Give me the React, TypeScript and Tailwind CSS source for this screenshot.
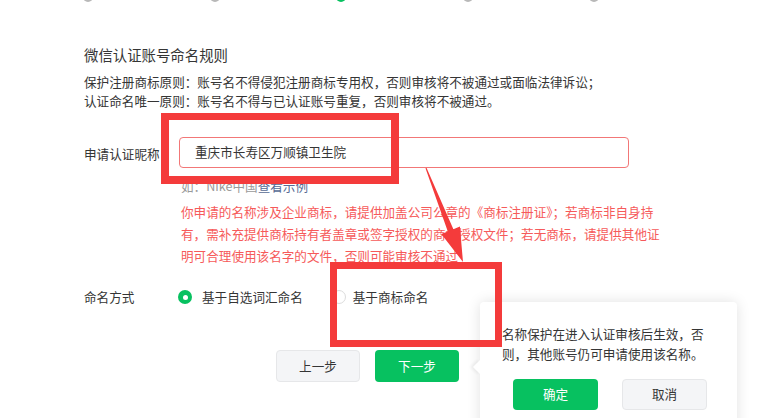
import type { FC } from "react";

const steps = [false, false, true, false, false];

const Steps: FC = () => (
  <div className="flex h-[3px] gap-[116.5px] overflow-hidden pl-[83px]">
    {steps.map((on, i) => (
      <span
        key={i}
        className={`-mt-[8px] block h-[10px] w-[10px] shrink-0 rounded-full ${
          on ? "bg-[#07c160]" : "bg-[#b8b8b8]"
        }`}
      />
    ))}
  </div>
);

const Popover: FC = () => (
  <div className="absolute left-[480px] top-[302px] h-[140px] w-[257px] rounded-[4px] bg-white px-[22px] pt-[22px] shadow-[0_0_14px_rgba(0,0,0,0.12)]">
    <span className="absolute -left-[5px] top-[60px] h-[10px] w-[10px] rotate-45 bg-white shadow-[-2px_2px_3px_rgba(0,0,0,0.06)]" />
    <p className="w-[206px] text-[12.6px] leading-[20px] text-[#353535]">
      名称保护在进入认证审核后生效，否则，其他账号仍可申请使用该名称。
    </p>
    <div className="mt-[15px] flex justify-center gap-[24px] pl-[3px]">
      <button className="h-[31px] w-[85px] rounded-[4px] bg-[#07c160] text-[12.6px] text-white">
        确定
      </button>
      <button className="h-[31px] w-[85px] rounded-[4px] border border-[#e6e7e9] bg-[#f4f5f7] text-[12.6px] text-[#353535]">
        取消
      </button>
    </div>
  </div>
);

const Annotations: FC = () => (
  <>
    <div className="absolute left-[161px] top-[113px] h-[71px] w-[238px] border-[8px] border-[#f43b3b] border-t-[7px]" />
    <div className="absolute left-[330px] top-[262px] h-[85px] w-[172px] border-[7px] border-[#f43b3b]" />
    <svg
      className="pointer-events-none absolute left-0 top-0"
      width="757"
      height="418"
      viewBox="0 0 757 418"
    >
      <polygon
        fill="#f43b3b"
        points="425.5,168.2 426.5,167.8 453.4,229.2 459.9,226.6 463,262 441.3,234 447.8,231.4"
      />
    </svg>
  </>
);

const App: FC = () => {
  return (
    <div className="relative h-[418px] w-[757px] overflow-hidden bg-white font-['Noto_Sans_CJK_SC','Noto_Sans',sans-serif] text-[#353535]">
      <Steps />

      <div className="pl-[84px]">
        <h2 className="mt-[42px] text-[14.4px] leading-[20px] text-[#353535]">
          微信认证账号命名规则
        </h2>
        <div className="mt-[6.5px] text-[12.6px] leading-[19px]">
          <p>保护注册商标原则：账号名不得侵犯注册商标专用权，否则审核将不被通过或面临法律诉讼；</p>
          <p>认证命名唯一原则：账号名不得与已认证账号重复，否则审核将不被通过。</p>
        </div>

        <div className="mt-[27.5px] flex items-center">
          <label className="w-[95px] pt-[3px] text-[12.6px]">申请认证昵称</label>
          <div className="flex h-[31px] w-[450px] items-center rounded-[4px] border border-[#f27777] px-[15px] text-[12.6px]">
            重庆市长寿区万顺镇卫生院
          </div>
        </div>

        <div className="ml-[97px]">
          <p className="mt-[8px] text-[12.6px] leading-[20px] text-[#9a9a9a]">
            如：Nike中国<span className="text-[#576b95]">查看示例</span>
          </p>
          <p className="mt-[5px] w-[482px] text-[12.6px] leading-[22px] text-[#f65a5a]">
            你申请的名称涉及企业商标，请提供加盖公司公章的《商标注册证》；若商标非自身持有，需补充提供商标持有者盖章或签字授权的商标授权文件；若无商标，请提供其他证明可合理使用该名字的文件，否则可能审核不通过
          </p>
        </div>

        <div className="mt-[20px] flex h-[20px] items-center text-[12.6px]">
          <span className="w-[94px]">命名方式</span>
          <span className="flex h-[14px] w-[14px] items-center justify-center rounded-full bg-[#07c160]">
            <span className="h-[5px] w-[5px] rounded-full bg-white" />
          </span>
          <span className="ml-[10px]">基于自选词汇命名</span>
          <span className="ml-[29px] h-[14px] w-[14px] rounded-full border border-[#dcdcdc] bg-white" />
          <span className="ml-[7px]">基于商标命名</span>
        </div>

        <div className="ml-[192px] mt-[43px] flex gap-[15px]">
          <button className="h-[32px] w-[84px] rounded-[4px] border border-[#e6e7e9] bg-[#f4f5f7] text-[12.6px] text-[#353535]">
            上一步
          </button>
          <button className="h-[32px] w-[84px] rounded-[4px] bg-[#07c160] text-[12.6px] text-white">
            下一步
          </button>
        </div>
      </div>

      <Popover />
      <Annotations />
    </div>
  );
};

export default App;
